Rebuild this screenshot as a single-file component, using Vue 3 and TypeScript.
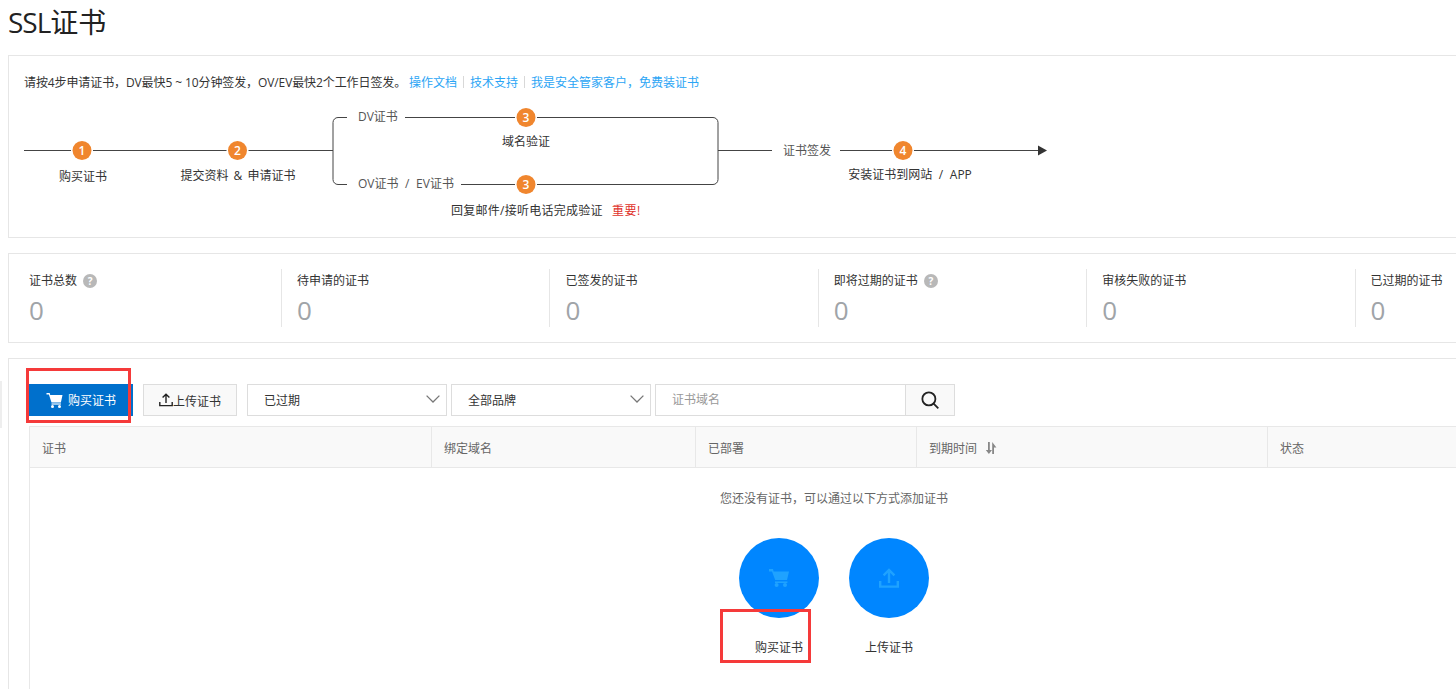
<script setup lang="ts">
const stats = [
  { label: '证书总数', help: true },
  { label: '待申请的证书', help: false },
  { label: '已签发的证书', help: false },
  { label: '即将过期的证书', help: true },
  { label: '审核失败的证书', help: false },
  { label: '已过期的证书', help: false },
]

const columns = ['证书', '绑定域名', '已部署', '到期时间', '状态']

// diagram coordinates are relative to the svg's top-left corner
const stepDots = [
  { x: 58, y: 50, n: 1 },
  { x: 213.5, y: 50, n: 2 },
  { x: 502, y: 17, n: 3 },
  { x: 502, y: 84, n: 3 },
  { x: 879, y: 50, n: 4 },
]
</script>

<template>
  <div class="page">
    <h1 class="title"><span class="title-latin">SSL</span>证书</h1>

    <section class="panel guide">
      <p class="intro">
        <span class="intro-text">请按4步申请证书，DV最快5 ~ 10分钟签发，OV/EV最快2个工作日签发。</span>
        <a class="link">操作文档</a><i class="sep"></i><a class="link">技术支持</a><i class="sep"></i><a class="link">我是安全管家客户，免费装证书</a>
      </p>

      <svg class="flow" width="1040" height="124" viewBox="0 0 1040 124">
        <g fill="none" stroke="#444" stroke-width="1">
          <path d="M0 50.5H309" />
          <path d="M323 17.5H314a5 5 0 0 0-5 5V79.5a5 5 0 0 0 5 5H323" />
          <path d="M381 17.5H689a5 5 0 0 1 5 5V79.5a5 5 0 0 1-5 5H437" />
          <path d="M694 50.5H748" />
          <path d="M816 50.5H1016" />
        </g>
        <path d="M1014 45.5L1023 50.5L1014 55.5z" fill="#333" />
        <g v-for="(d, i) in stepDots" :key="i">
          <circle :cx="d.x" :cy="d.y + 0.5" r="11" fill="#fff" />
          <circle :cx="d.x" :cy="d.y + 0.5" r="9.5" fill="#f0862e" />
          <text :x="d.x" :y="d.y + 5" text-anchor="middle" class="dot-num">{{ d.n }}</text>
        </g>
        <text x="59" y="81" text-anchor="middle" class="flow-text">购买证书</text>
        <text x="214" y="80" text-anchor="middle" class="flow-text wide-s">提交资料 &amp; 申请证书</text>
        <text x="334" y="21" class="flow-text light">DV证书</text>
        <text x="334" y="88" class="flow-text light wide">OV证书 / EV证书</text>
        <text x="502" y="46" text-anchor="middle" class="flow-text">域名验证</text>
        <text x="427" y="115" class="flow-text reply">回复邮件/接听电话完成验证</text>
        <text x="588" y="115" class="flow-text red">重要!</text>
        <text x="759" y="55" class="flow-text light">证书签发</text>
        <text x="886" y="79" text-anchor="middle" class="flow-text wide">安装证书到网站 / APP</text>
      </svg>
    </section>

    <section class="panel stats">
      <div v-for="s in stats" :key="s.label" class="stat">
        <div class="stat-label">
          {{ s.label }}
          <span v-if="s.help" class="help">?</span>
        </div>
        <div class="stat-num">0</div>
      </div>
    </section>

    <section class="panel list">
      <div class="toolbar">
        <button class="btn btn-primary">
          <svg class="icon-cart" viewBox="0 0 16 16" fill="#fff">
            <path d="M0 1h3.2l.5 2H16l-1.6 7.4H5L2.4 2.6H0z" />
            <path d="M5 11.4h9.4v1.2H5z" />
            <circle cx="6" cy="14.4" r="1.5" />
            <circle cx="13" cy="14.4" r="1.5" />
          </svg>
          购买证书
        </button>
        <button class="btn btn-default">
          <svg class="icon-up" viewBox="0 0 14 14" fill="none" stroke="#222" stroke-width="1.4">
            <path d="M7 10V1.5M3.6 4.6L7 1.2l3.4 3.4M.8 9v3.6h12.4V9" />
          </svg>上传证书
        </button>
        <div class="select select-first">
          已过期
          <svg class="chevron" viewBox="0 0 14 8" fill="none" stroke="#777" stroke-width="1.3"><path d="M.6.6L7 7l6.4-6.4" /></svg>
        </div>
        <div class="select">
          全部品牌
          <svg class="chevron" viewBox="0 0 14 8" fill="none" stroke="#777" stroke-width="1.3"><path d="M.6.6L7 7l6.4-6.4" /></svg>
        </div>
        <div class="search">
          <span class="search-text">证书域名</span>
          <span class="search-btn">
            <svg viewBox="0 0 16 16" fill="none" stroke="#222" stroke-width="1.6"><circle cx="7" cy="7" r="5.8" /><path d="M11 11l4.4 4.4" /></svg>
          </span>
        </div>
      </div>

      <div class="table">
        <div class="thead">
          <div v-for="c in columns" :key="c" class="th">
            {{ c }}
            <svg v-if="c === '到期时间'" class="sort" viewBox="0 0 12 12" fill="#888">
              <path d="M3 0h1.8v8H7L3.9 12 .8 8H3zM7.2 12V0L11.4 5.5H9V12z" />
            </svg>
          </div>
        </div>
        <div class="tbody">
          <p class="empty">您还没有证书，可以通过以下方式添加证书</p>
          <div class="actions">
            <div class="action">
              <span class="round">
                <svg viewBox="0 0 20 18" fill="#1fa2ff">
                  <path d="M0 0h4l.6 2.4H20l-2 8.6H6.2L3 2.4H0z" />
                  <path d="M6 12.4h12.4V14H6z" />
                  <circle cx="7.6" cy="16" r="2" />
                  <circle cx="16" cy="16" r="2" />
                </svg>
              </span>
              <span class="action-text">购买证书</span>
            </div>
            <div class="action">
              <span class="round">
                <svg viewBox="0 0 20 20" fill="none" stroke="#1fa2ff" stroke-width="2.4">
                  <path d="M10 15V2.4M4.6 7.4L10 2l5.4 5.4M1.2 13v5.6h17.6V13" />
                </svg>
              </span>
              <span class="action-text">上传证书</span>
            </div>
          </div>
        </div>
      </div>
    </section>

    <div class="edge-tab"></div>
    <div class="mark mark-buy"></div>
    <div class="mark mark-empty"></div>
  </div>
</template>

<style>
html, body { margin: 0; overflow: hidden; background: #fff; }
</style>

<style scoped>
.page {
  position: relative;
  width: 1456px;
  height: 689px;
  overflow: hidden;
  padding: 0 0 0 8px;
  box-sizing: border-box;
  font-family: "Open Sans", "Noto Sans CJK SC", sans-serif;
  font-size: 12px;
  color: #333;
}
.title {
  margin: 0;
  height: 55px;
  font-size: 28px;
  line-height: 44px;
  font-weight: 400;
  color: #222;
}
.title-latin { letter-spacing: -1px; }
.panel {
  width: 1660px;
  box-sizing: border-box;
  border: 1px solid #e6e6e6;
}

.guide { height: 183px; padding: 0 15px; }
.intro {
  margin: 0;
  padding-top: 17px;
  height: 44px;
  box-sizing: border-box;
  line-height: 20px;
  color: #333;
}
.intro-text { letter-spacing: -0.1px; margin-right: 3px; }
.link { color: #2ba5f5; }
.sep {
  display: inline-block;
  width: 1px;
  height: 12px;
  margin: 0 6px;
  background: #d8d8d8;
  vertical-align: -1px;
}
.flow { display: block; }
.dot-num { font-size: 12px; font-weight: 600; fill: #fff; }
.flow-text { font-size: 12px; fill: #333; }
.flow-text.light { fill: #555; }
.flow-text.red { fill: #e0332c; letter-spacing: 0.5px; }
.flow-text.wide { word-spacing: 3.5px; }
.flow-text.wide-s { word-spacing: 2px; }
.flow-text.reply { letter-spacing: 0.25px; }

.stats {
  display: flex;
  height: 90px;
  margin-top: 15px;
  padding-top: 15px;
}
.stat {
  flex: 0 0 268.4px;
  box-sizing: border-box;
  height: 58px;
  padding-left: 15px;
  border-left: 1px solid #e6e6e6;
}
.stat:first-child { flex-basis: 272px; padding-left: 20px; border-left: 0; }
.stat-label {
  display: flex;
  align-items: center;
  gap: 6px;
  height: 22px;
  color: #333;
}
.help {
  width: 14px;
  height: 14px;
  margin-top: 2px;
  border-radius: 50%;
  background: #b8b8b8;
  color: #fff;
  font-size: 10px;
  font-weight: 700;
  line-height: 14px;
  text-align: center;
}
.stat-num {
  font-size: 26px;
  line-height: 38px;
  color: #a0a4a8;
  font-weight: 400;
}

.list {
  height: 340px;
  margin-top: 15px;
  padding: 25px 0 0 20px;
}
.toolbar { display: flex; height: 32px; }
.btn {
  display: flex;
  align-items: center;
  justify-content: center;
  box-sizing: border-box;
  height: 32px;
  margin: 0;
  padding: 0;
  font: inherit;
}
.btn-primary {
  width: 104px;
  gap: 5px;
  border: 0;
  background: #0070cc;
  color: #fff;
}
.icon-cart { width: 17px; height: 16px; }
.btn-default {
  width: 94px;
  margin-left: 10px;
  border: 1px solid #ddd;
  background: #f9f9f9;
  color: #333;
  padding-top: 2px;
}
.icon-up { width: 14px; height: 14px; margin-top: -3px; }
.select {
  position: relative;
  display: flex;
  align-items: center;
  width: 200px;
  height: 32px;
  box-sizing: border-box;
  margin-left: 4px;
  padding-left: 16px;
  border: 1px solid #ddd;
  color: #333;
}
.select-first { margin-left: 10px; }
.chevron {
  position: absolute;
  right: 6px;
  top: 10px;
  width: 14px;
  height: 8px;
}
.search {
  display: flex;
  width: 300px;
  height: 32px;
  box-sizing: border-box;
  margin-left: 4px;
  border: 1px solid #ddd;
}
.search-text {
  flex: 1;
  padding-left: 16px;
  line-height: 30px;
  color: #999;
}
.search-btn {
  display: flex;
  align-items: center;
  justify-content: center;
  width: 48px;
  border-left: 1px solid #ddd;
  background: #f9f9f9;
}
.search-btn svg { width: 18px; height: 18px; }

.table {
  width: 1610px;
  margin-top: 10px;
  border: 1px solid #e8e8e8;
  border-bottom: 0;
  box-sizing: border-box;
}
.thead {
  display: grid;
  grid-template-columns: 401px 264px 221px 351px 1fr;
  height: 40px;
  background: #f9f9f9;
  border-bottom: 1px solid #e8e8e8;
}
.th {
  display: flex;
  align-items: center;
  gap: 8px;
  box-sizing: border-box;
  padding: 1px 0 0 12px;
  border-left: 1px solid #e8e8e8;
  color: #666;
}
.th:first-child { border-left: 0; }
.sort { width: 12px; height: 12px; }
.tbody { height: 240px; text-align: center; }
.empty {
  margin: 0;
  padding-top: 21px;
  line-height: 20px;
  color: #666;
}
.actions {
  display: flex;
  justify-content: center;
  gap: 30px;
  margin-top: 29px;
}
.action {
  display: flex;
  flex-direction: column;
  align-items: center;
  width: 80px;
}
.round {
  display: flex;
  align-items: center;
  justify-content: center;
  width: 80px;
  height: 80px;
  border-radius: 50%;
  background: #0086ff;
}
.round svg { width: 20px; height: 20px; }
.action-text {
  margin-top: 20px;
  line-height: 20px;
  color: #333;
}

.edge-tab {
  position: absolute;
  left: 0;
  top: 381px;
  width: 2px;
  height: 47px;
  background: #eee;
}
.mark {
  position: absolute;
  box-sizing: border-box;
  border: 3px solid #f53a3a;
}
.mark-buy { left: 26px; top: 368px; width: 105px; height: 55px; }
.mark-empty { left: 720px; top: 609px; width: 91px; height: 54px; }
</style>
